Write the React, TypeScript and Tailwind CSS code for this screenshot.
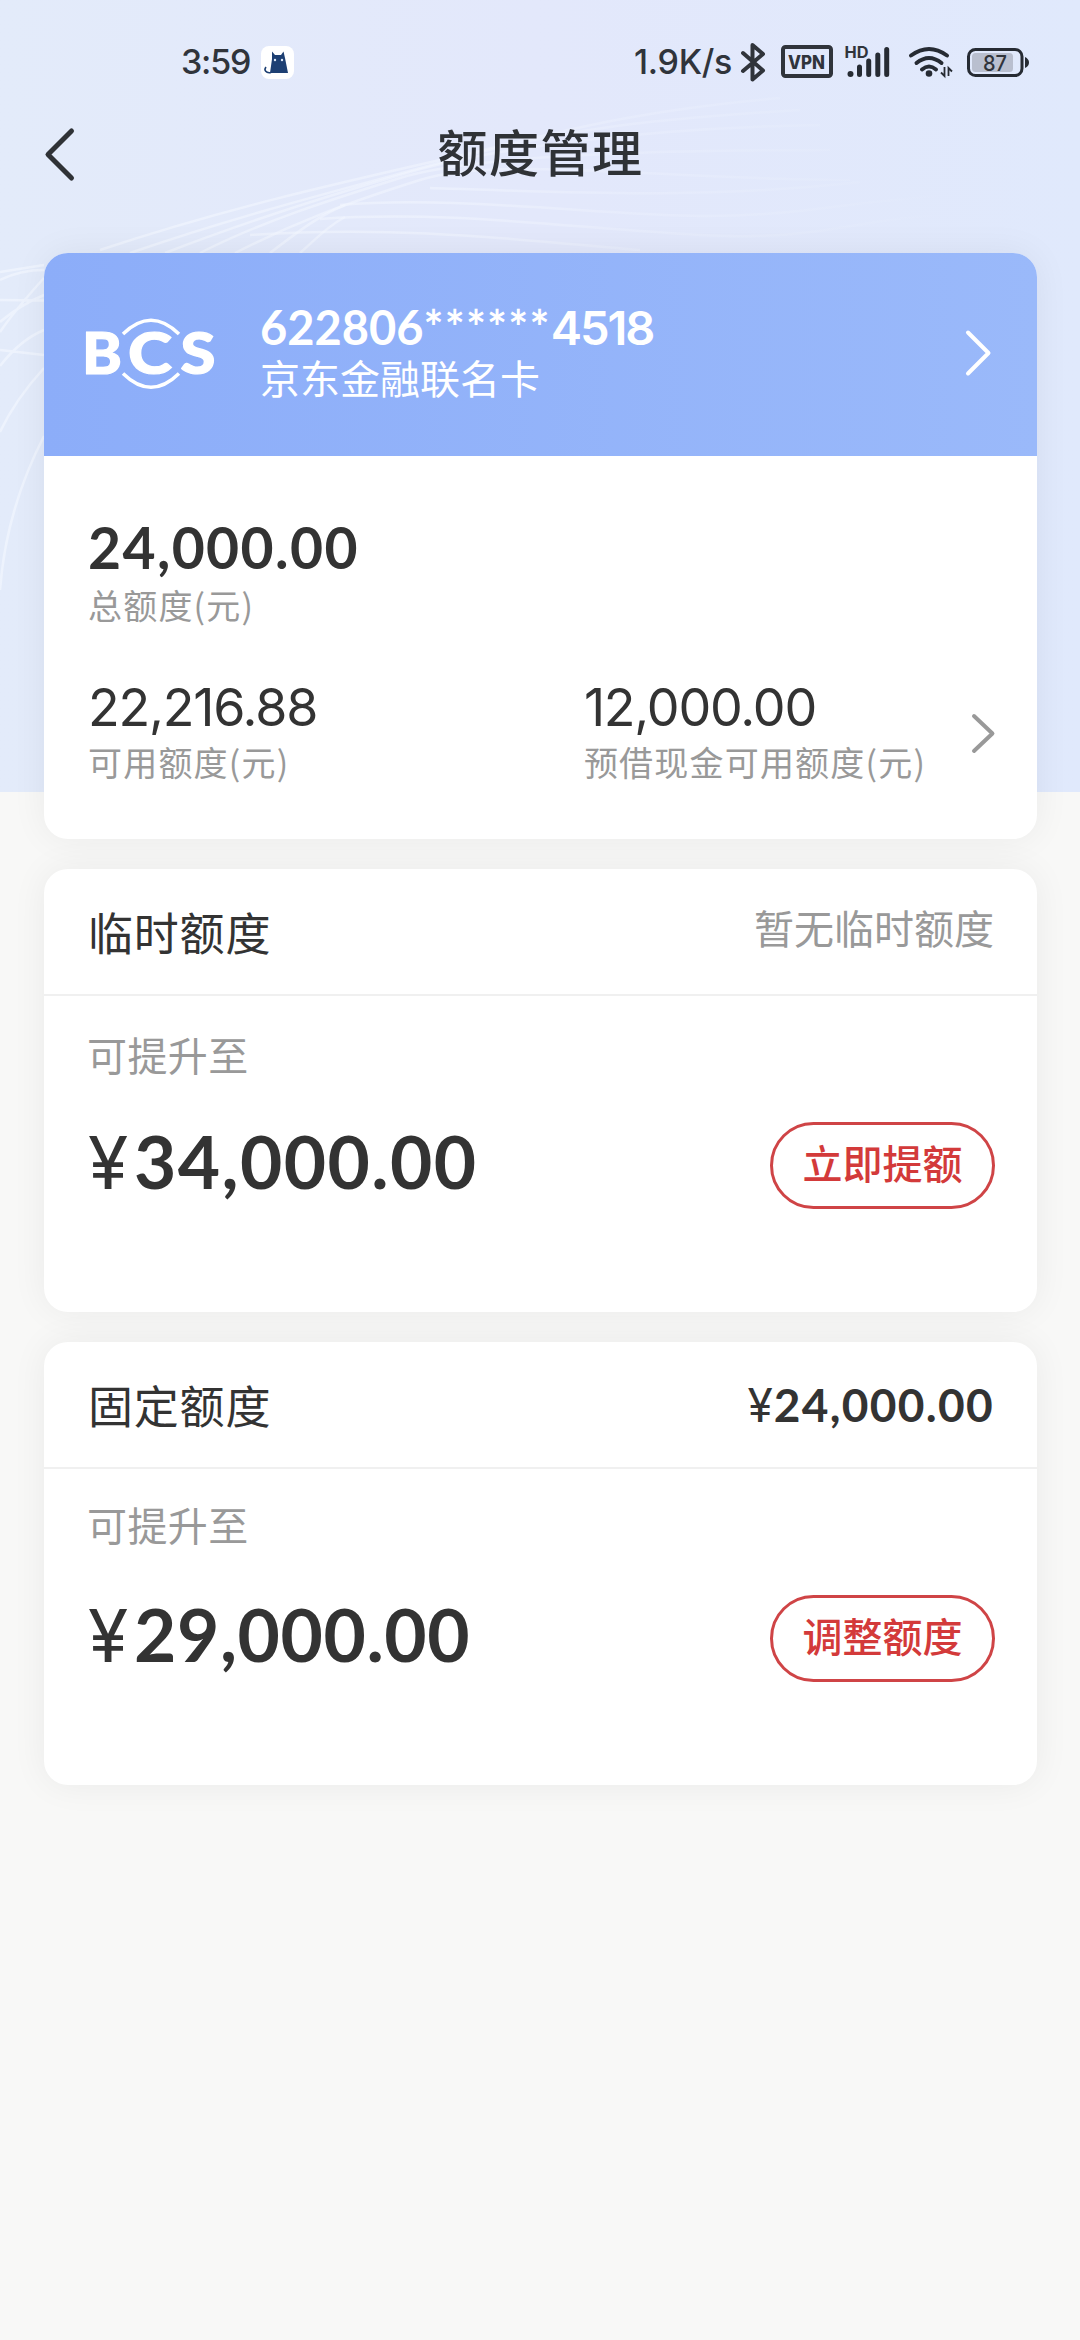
import React from 'react';

interface QuotaCardProps {
  title: string;
  extra: React.ReactNode;
  amount: React.ReactNode;
  action: string;
  hintClass: string;
}

const StatusBar: React.FC = () => (
  <div className="flex h-[124px] items-center justify-between pl-[181px] pr-[51px] font-['Inter'] text-[#30343b]">
    <div className="flex items-center gap-[10px]">
      <span className="w-[70px] whitespace-nowrap text-[34px] font-medium leading-none tracking-[-1.2px]">3:59</span>
      <svg width="33" height="33" viewBox="0 0 33 33">
        <rect width="33" height="33" rx="8" fill="#fff" />
        <path d="M9 27 11 13 11 5.500 14 9H20L22.500 5.500 24 12 27 27Z" fill="#1d3f73" />
        <path d="M10 26.500C5 27.500 2.500 24 5 21" fill="none" stroke="#1d3f73" strokeWidth="1.6" />
        <circle cx="14" cy="14" r="1.200" fill="#dfe9f8" />
        <circle cx="21" cy="14" r="1.200" fill="#dfe9f8" />
      </svg>
    </div>
    <div className="flex items-center">
      <span className="mr-[8px] w-[98px] whitespace-nowrap text-[34px] font-medium leading-none tracking-[-0.3px]">1.9K/s</span>
      <svg width="290" height="44" viewBox="739 40 290 44" fill="none" stroke="#30343b">
        <path d="M742 53 762 70.500 751.500 79.500V45L762 54 742 71" strokeWidth="4" strokeLinejoin="round" strokeLinecap="round" />
        <rect x="782" y="47" width="48" height="29" rx="2.500" strokeWidth="4" />
        <text x="787" y="68.500" textLength="37" lengthAdjust="spacingAndGlyphs" fontSize="18.500" fontWeight="800" fill="#30343b" stroke="none">VPN</text>
        <text x="843.500" y="58" textLength="24" lengthAdjust="spacingAndGlyphs" fontSize="16" fontWeight="700" fill="#30343b" stroke="none">HD</text>
        <circle cx="849.500" cy="74" r="3" fill="#262b33" stroke="none" />
        <path d="M858.500 67V74.500M867.700 61V74.500M876.800 55V74.500M885.700 49.500V74.500" stroke="#262b33" strokeWidth="5" strokeLinecap="round" />
        <path d="M910 55.500Q928 42.500 946 55.500M915.500 63Q928 53 940.500 63M921 69.500Q928 63.500 935 69.500" stroke="#262b33" strokeWidth="4" strokeLinecap="round" />
        <circle cx="928" cy="73.500" r="3.300" fill="#262b33" stroke="none" />
        <path d="M943.500 67V76L940 72.500M947.500 76V68L951 71.500" stroke="#262b33" strokeWidth="1.800" />
        <rect x="967.500" y="49.500" width="53.500" height="26" rx="7" stroke="#262b33" strokeWidth="3" />
        <rect x="971" y="53" width="41" height="19" rx="3.500" fill="#b9bfcf" stroke="none" />
        <path d="M1024 57Q1028 59 1028 62.500T1024 68Z" fill="#262b33" stroke="none" />
        <text x="982" y="70.500" textLength="24" lengthAdjust="spacingAndGlyphs" fontSize="21.500" fontWeight="500" fill="#30343b" stroke="none">87</text>
      </svg>
    </div>
  </div>
);

const BankLogo: React.FC = () => (
  <svg width="138" height="80" viewBox="80 314 138 80" fill="#fff" stroke="#fff" strokeWidth="1.2" className="mb-[2px] font-['Lato']">
    <text x="82" y="374" textLength="40" lengthAdjust="spacingAndGlyphs" fontSize="56.500" fontWeight="900">B</text>
    <text x="128" y="374" textLength="44" lengthAdjust="spacingAndGlyphs" fontSize="56.500" fontWeight="900">C</text>
    <text x="180.500" y="374" textLength="35" lengthAdjust="spacingAndGlyphs" fontSize="56.500" fontWeight="900">S</text>
    <path d="M123 334Q151 306.500 179 334M123 373.500Q151 401 179 373.500" fill="none" strokeWidth="3.500" />
  </svg>
);

const Backdrop: React.FC = () => (
  <div className="col-start-1 row-start-1 h-[792px] bg-gradient-to-r from-[#e3ebfa] via-[#e3e8fb] to-[#e0e9fc]">
    <svg width="1080" height="792" viewBox="0 0 1080 792" fill="none" stroke="url(#wave)" strokeWidth="2.500">
      <defs>
        <linearGradient id="wave" gradientUnits="userSpaceOnUse" x1="0" y1="0" x2="960" y2="0">
          <stop offset="0" stopColor="#f3f7ff" stopOpacity="0.65" />
          <stop offset="0.45" stopColor="#f3f7ff" stopOpacity="0.5" />
          <stop offset="0.65" stopColor="#f3f7ff" stopOpacity="0.25" />
          <stop offset="1" stopColor="#f3f7ff" stopOpacity="0" />
        </linearGradient>
      </defs>
      <path d="M100 250C220 210 330 185 440 160S620 112 780 98" />
      <path d="M130 253C240 215 340 190 450 160S640 120 800 110" />
      <path d="M165 253C250 220 330 195 410 172S640 128 820 125" />
      <path d="M200 253C260 222 330 200 400 178S640 150 830 150" />
      <path d="M235 253C290 225 340 205 420 180S660 180 850 180" />
      <path d="M270 253C300 230 320 215 345 205" />
      <path d="M300 253C320 235 330 225 345 217" />
      <path d="M340 205C450 195 600 215 700 216S850 200 960 195" />
      <path d="M250 235C400 225 520 240 640 250" />
      <path d="M320 219C450 210 570 228 700 235S860 215 960 215" />
      <path d="M430 188C560 192 700 200 860 182" />
      <path d="M0 272 44 265M0 280Q20 270 44 270M0 300L44 300.500M0 322Q20 305 44 295M0 332Q15 310 44 278M0 350 44 355M0 366Q20 340 44 330M0 432Q15 400 44 368M0 590Q6 510 44 436" />
    </svg>
  </div>
);

const QuotaCard: React.FC<QuotaCardProps> = ({ title, extra, amount, action, hintClass }) => (
  <section className="h-[443px] rounded-[24px] bg-white shadow-[0_0_36px_rgba(0,0,0,0.06)]">
    <div className="flex h-[127px] items-center justify-between border-b-2 border-[#f0f0f0] pl-[44px] pr-[43px]">
      <h2 className="font-['Noto_Sans_CJK_SC'] text-[45px] leading-none tracking-[0.8px] text-[#333]">{title}</h2>
      {extra}
    </div>
    <div className={hintClass}>可提升至</div>
    <div className="flex items-start justify-between pl-[44px] pr-[42px]">
      <div className="flex items-baseline pt-[1px] text-[73px] leading-none text-[#333]">
        <span className="w-[46px] font-['Inter']">¥</span>
        {amount}
      </div>
      <button className="-mt-[2px] h-[87px] w-[225px] rounded-full border-[3px] border-[#cf4446] pb-[8px] font-['Noto_Sans_CJK_SC'] text-[40px] font-medium leading-none text-[#d33a3a]">
        {action}
      </button>
    </div>
  </section>
);

const App: React.FC = () => (
  <div className="grid h-[2340px] w-[1080px] overflow-hidden bg-[#f8f8f7]">
    <Backdrop />
    <div className="z-10 col-start-1 row-start-1 flex flex-col">
      <StatusBar />
      <header className="flex h-[60px] items-center">
        <svg className="ml-[40px]" width="40" height="60" viewBox="40 124 40 60" fill="none" stroke="#2f3236" strokeWidth="5" strokeLinecap="round" strokeLinejoin="round">
          <path d="M71.500 131 48 154.500 71.500 178" />
        </svg>
        <h1 className="-ml-[80px] w-full pb-[9px] text-center font-['Noto_Sans_CJK_SC'] text-[50px] font-medium leading-none tracking-[1.5px] text-[#2f3236]">额度管理</h1>
      </header>

      <main className="mx-[44px] mt-[69px] flex w-[993px] flex-col gap-[30px]">
        <section className="h-[586px] overflow-hidden rounded-[24px] bg-white shadow-[0_0_36px_rgba(0,0,0,0.06)]">
          <div className="flex h-[203px] items-center bg-gradient-to-r from-[#8cadf9] to-[#9ab9fa] pl-[36px] pr-[42px] text-white">
            <BankLogo />
            <div className="ml-[42px] flex-1 pb-[8px]">
              <div className="font-['Lato'] text-[47px] font-bold leading-none">
                622806<span className="tracking-[1.2px]">******</span>
                <span className="font-['Inter'] font-semibold tracking-[-2px]">4518</span>
              </div>
              <div className="mt-[6px] font-['Noto_Sans_CJK_SC'] text-[40px] leading-none">京东金融联名卡</div>
            </div>
            <svg className="mb-[4px]" width="30" height="50" viewBox="0 0 30 50" fill="none" stroke="#fff" strokeWidth="4" strokeLinecap="round" strokeLinejoin="round">
              <path d="M3 4.500 23.500 25 3 45.500" />
            </svg>
          </div>
          <div className="pl-[44px] pr-[40px] pt-[63px]">
            <div className="font-['Lato'] text-[57px] font-bold leading-none tracking-[1.4px] text-[#333]">24,000.00</div>
            <div className="mt-[12px] font-['Noto_Sans_CJK_SC'] text-[34px] leading-none tracking-[1.2px] text-[#999]">总额度(元)</div>
            <div className="mt-[60px] flex">
              <div className="w-[497px]">
                <div className="font-['Inter'] text-[52px] leading-none tracking-[-1.2px] text-[#333]">22,216.88</div>
                <div className="mt-[11px] font-['Noto_Sans_CJK_SC'] text-[34px] leading-none tracking-[1.2px] text-[#999]">可用额度(元)</div>
              </div>
              <div className="w-[380px]">
                <div className="font-['Inter'] text-[52px] leading-none tracking-[-1.2px] text-[#333]">12,000.00</div>
                <div className="mt-[11px] whitespace-nowrap font-['Noto_Sans_CJK_SC'] text-[34px] leading-none tracking-[1.2px] text-[#999]">预借现金可用额度(元)</div>
              </div>
              <svg className="ml-[8px] mt-[28px]" width="26" height="46" viewBox="0 0 26 46" fill="none" stroke="#999" strokeWidth="4" strokeLinecap="round" strokeLinejoin="round">
                <path d="M3 6 21.500 23.500 3 41" />
              </svg>
            </div>
          </div>
        </section>

        <QuotaCard
          title="临时额度"
          extra={<span className="pb-[9px] font-['Noto_Sans_CJK_SC'] text-[40px] leading-none text-[#999]">暂无临时额度</span>}
          amount={<span className="font-['Lato'] font-bold tracking-[1.4px]">34,000.00</span>}
          action="立即提额"
          hintClass="mb-[50px] ml-[43px] mt-[38px] font-['Noto_Sans_CJK_SC'] text-[40px] leading-none tracking-[0.4px] text-[#999]"
        />
        <QuotaCard
          title="固定额度"
          extra={
            <span className="font-['Inter'] text-[46px] leading-none text-[#333]">
              ¥<span className="ml-px font-['Lato'] font-bold tracking-[1.3px]">24,000.00</span>
            </span>
          }
          amount={<span className="font-['Lato'] font-bold tracking-[0.6px]">29,000.00</span>}
          action="调整额度"
          hintClass="mb-[53px] ml-[43px] mt-[35px] font-['Noto_Sans_CJK_SC'] text-[40px] leading-none tracking-[0.4px] text-[#999]"
        />
      </main>
    </div>
  </div>
);

export default App;
